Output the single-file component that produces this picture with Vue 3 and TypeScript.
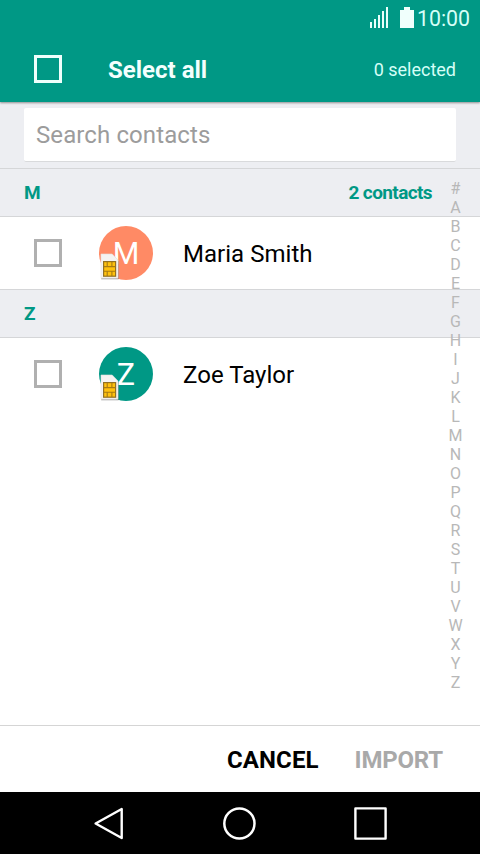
<script setup lang="ts">
interface Contact {
  name: string
  color: string
}
interface Section {
  letter: string
  contacts: Contact[]
}

const sections: Section[] = [
  { letter: 'M', contacts: [{ name: 'Maria Smith', color: '#ff8a65' }] },
  { letter: 'Z', contacts: [{ name: 'Zoe Taylor', color: '#009885' }] },
]
const total = sections.reduce((sum, s) => sum + s.contacts.length, 0)
const indexLetters: string[] = [...'#ABCDEFGHIJKLMNOPQRSTUVWXYZ']
</script>

<template>
  <div class="screen">
    <header class="top">
      <div class="status">
        <svg class="signal" width="19" height="22" viewBox="0 0 19 22" fill="#e8fffa">
          <rect x="0" y="15" width="2" height="6" />
          <rect x="4" y="12" width="2" height="9" />
          <rect x="8" y="8" width="2" height="13" />
          <rect x="12" y="4" width="2" height="17" />
          <rect x="16" y="0" width="2" height="21" />
        </svg>
        <svg class="battery" width="14" height="21" viewBox="0 0 14 21">
          <path d="M4 0h6v3h4v18H0V3h4z" fill="#f0fffc" />
        </svg>
        <span class="clock">10:00</span>
      </div>
      <div class="bar">
        <span class="check light"></span>
        <span class="title">Select all</span>
        <span class="count">0 selected</span>
      </div>
    </header>

    <div class="search">
      <div class="field">Search contacts</div>
    </div>

    <main class="list">
      <section v-for="(section, i) in sections" :key="section.letter">
        <div class="heading">
          <span>{{ section.letter }}</span>
          <span v-if="i === 0" class="total">{{ total }} contacts</span>
        </div>
        <div v-for="contact in section.contacts" :key="contact.name" class="row">
          <span class="check"></span>
          <div class="avatar" :style="{ background: contact.color }">
            {{ contact.name[0] }}
            <svg class="sim" width="20" height="27" viewBox="0 0 20 27">
              <path d="M1.2 1.8h11L18.6 8v18.2H1.2z" fill="#555" opacity=".6" />
              <path d="M1 1h11.2L18 7v18.2H1z" fill="#f5f3f1" stroke="#e4e1de" stroke-width=".6" />
              <rect x="3.6" y="8.6" width="12" height="14.6" fill="#ffc10d" stroke="#927022" stroke-width="1.2" />
              <path d="M7.2 9v4.3M11.9 9v4.3M7.2 18.4v4.5M11.9 18.4v4.5M4 13.6h11.5M4 18.2h11.5" fill="none" stroke="#a77a12" stroke-width="1.1" />
            </svg>
          </div>
          <span class="name">{{ contact.name }}</span>
        </div>
      </section>
    </main>

    <nav class="index">
      <span v-for="letter in indexLetters" :key="letter">{{ letter }}</span>
    </nav>

    <footer class="actions">
      <span class="cancel">CANCEL</span>
      <span class="import">IMPORT</span>
    </footer>

    <div class="navbar">
      <svg width="34" height="36" viewBox="0 0 34 36" fill="none" stroke="#fff" stroke-width="2.4">
        <path d="M3.6 18.5L29.7 4v29z" stroke-linejoin="round" />
      </svg>
      <svg width="36" height="36" viewBox="0 0 36 36" fill="none" stroke="#fff" stroke-width="2.5">
        <circle cx="18.4" cy="18.5" r="15.1" />
      </svg>
      <svg width="36" height="36" viewBox="0 0 36 36" fill="none" stroke="#fff" stroke-width="2.4">
        <rect x="3.4" y="3.4" width="30.2" height="30.2" stroke-linejoin="round" />
      </svg>
    </div>
  </div>
</template>

<style>
body {
  margin: 0;
  background: #fff;
}
</style>

<style scoped>
.screen {
  position: relative;
  display: flex;
  flex-direction: column;
  width: 480px;
  height: 854px;
  overflow: hidden;
  background: #fff;
  color: #000;
  font-family: Roboto, sans-serif;
  white-space: nowrap;
}
.top {
  position: relative;
  z-index: 1;
  height: 102px;
  background: #009885;
  box-shadow: 0 1px 2px rgba(0, 0, 0, 0.4);
}
.status {
  display: flex;
  align-items: flex-start;
  justify-content: flex-end;
  box-sizing: border-box;
  height: 37px;
  padding: 7px 10px 0 0;
}
.battery {
  margin-left: 11px;
}
.clock {
  margin-left: 3px;
  color: #d5fff7;
  font-size: 21.3px;
  line-height: 24px;
}
.bar {
  display: flex;
  align-items: center;
  height: 65px;
  padding: 0 24px 0 34px;
}
.check {
  box-sizing: border-box;
  flex: none;
  width: 28px;
  height: 28px;
  border: 3px solid #b0b0b0;
}
.light {
  margin-bottom: 2px;
  border-color: #effffc;
}
.title {
  margin-left: 46px;
  color: #f3fffd;
  font-size: 24px;
  font-weight: 700;
}
.count {
  margin-left: auto;
  color: #d5fff7;
  font-size: 18px;
}
.search {
  box-sizing: border-box;
  height: 66px;
  padding: 6px 24px 0;
  background: #edeef2;
}
.field {
  height: 53px;
  padding-left: 12px;
  border-bottom: 1px solid #d9dadc;
  border-radius: 2px;
  background: #fff;
  color: #9c9c9c;
  font-size: 24px;
  letter-spacing: 0.1px;
  line-height: 54px;
}
.list {
  flex: 1;
}
.heading {
  display: flex;
  align-items: center;
  justify-content: space-between;
  box-sizing: border-box;
  height: 49px;
  padding: 0 48px 0 24px;
  border-top: 1px solid #d5d6d8;
  border-bottom: 1px solid #d5d6d8;
  background: #edeef2;
  color: #009885;
  font-size: 19px;
  font-weight: 700;
}
.total {
  letter-spacing: -0.6px;
}
.row {
  display: flex;
  align-items: center;
  height: 72px;
  padding-left: 34px;
}
.avatar {
  position: relative;
  width: 54px;
  height: 54px;
  margin-left: 37px;
  border-radius: 50%;
  color: #fff;
  font-size: 30.5px;
  line-height: 55px;
  text-align: center;
}
.sim {
  position: absolute;
  left: 1px;
  bottom: 0;
}
.name {
  padding-top: 2px;
  margin-left: 30px;
  font-size: 24px;
  letter-spacing: 0.03px;
}
.index {
  position: absolute;
  top: 179px;
  left: 446px;
  display: flex;
  flex-direction: column;
  width: 19px;
  color: #b8b8b8;
  font-size: 16px;
  line-height: 19px;
  text-align: center;
}
.actions {
  display: flex;
  align-items: center;
  justify-content: flex-end;
  gap: 36px;
  box-sizing: border-box;
  height: 67px;
  padding: 2px 37px 0 0;
  border-top: 1px solid #d5d5d5;
  font-size: 24px;
  font-weight: 700;
}
.cancel {
  letter-spacing: 0.1px;
}
.import {
  color: #a9a9a9;
  letter-spacing: -0.2px;
}
.navbar {
  display: flex;
  align-items: center;
  justify-content: space-between;
  box-sizing: border-box;
  height: 62px;
  padding: 0 92px;
  background: #000;
}
</style>
